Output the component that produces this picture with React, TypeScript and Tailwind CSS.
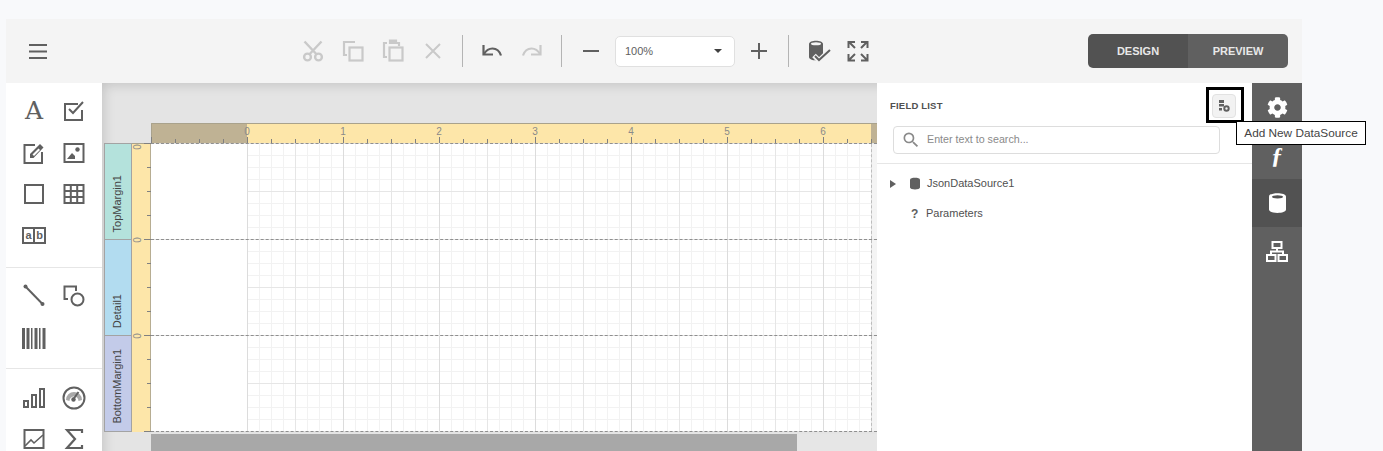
import type { ReactNode } from 'react';
import { FaCog } from 'react-icons/fa';
import { MdSearch } from 'react-icons/md';

const INK = '#606060';
const OFF = '#c9c9c9';

function ToolButton({ children }: { children: ReactNode }) {
  return <button className="flex h-10 w-10 shrink-0 items-center justify-center">{children}</button>;
}

function Separator() {
  return <div className="mx-[9px] h-8 w-px shrink-0 bg-[#b4b4b4]" />;
}

function ScissorsIcon() {
  return (
    <svg width="24" height="24" viewBox="0 0 24 24" fill="none" stroke={OFF} strokeWidth="2.4">
      <circle cx="6.5" cy="18" r="3.4" />
      <circle cx="17.5" cy="18" r="3.4" />
      <path d="M8.5 15.2 20.5 2.5M15.5 15.2 3.5 2.5" />
    </svg>
  );
}

function CopyIcon() {
  return (
    <svg width="24" height="24" viewBox="0 0 24 24" fill="none" stroke={OFF} strokeWidth="2.2">
      <path d="M14 3H3v13h3" />
      <rect x="8.5" y="8.5" width="13" height="13" />
    </svg>
  );
}

function PasteIcon() {
  return (
    <svg width="24" height="24" viewBox="0 0 24 24" fill="none" stroke={OFF} strokeWidth="2.2">
      <path d="M6 4H3v14h3M8 4h10v3" />
      <path d="M9 1.500h6V4H9z" fill={OFF} />
      <rect x="8.500" y="8.500" width="13" height="13" />
    </svg>
  );
}

function CloseIcon() {
  return (
    <svg width="24" height="24" viewBox="0 0 24 24" fill="none" stroke={OFF} strokeWidth="2">
      <path d="M5 5 19 19M19 5 5 19" />
    </svg>
  );
}

function UndoIcon({ color, flip }: { color: string; flip?: boolean }) {
  return (
    <svg
      width="22"
      height="16"
      viewBox="0 0 22 16"
      fill="none"
      stroke={color}
      strokeWidth="2.200"
      className={flip ? '-scale-x-100' : ''}
    >
      <path d="M2.500 2v9.500H12" />
      <path d="M3 11C5 7.500 8 5.500 11.500 5.500c4 0 7 2.500 8.500 7" />
    </svg>
  );
}

function DataCheckIcon() {
  return (
    <svg width="26" height="26" viewBox="0 0 26 26">
      <path d="M4 6c0-4.500 14-4.500 14 0v13c0 4.500-14 4.500-14 0z" fill={INK} />
      <ellipse cx="11" cy="5.800" rx="5" ry="1.500" fill="#f4f4f4" />
      <path d="M9 17.500 14 22.500 25.500 11.500" fill="none" stroke="#f4f4f4" strokeWidth="5" />
      <path d="M10 18 14 22 25 12" fill="none" stroke={INK} strokeWidth="2" />
    </svg>
  );
}

function ExpandIcon() {
  return (
    <svg width="22" height="22" viewBox="0 0 22 22" fill="none" stroke={INK} strokeWidth="2">
      <path d="M1.500 8V2H8M2 2l6 6M14 2h6.500v6M20 2l-6 6M1.500 14v6.500H8M2 20l6-6M14 20.500h6.500V14M20 20l-6-6" />
    </svg>
  );
}

function ToolIcon({ children }: { children: ReactNode }) {
  return (
    <svg width="24" height="24" viewBox="0 0 24 24" fill="none" stroke={INK} strokeWidth="2">
      {children}
    </svg>
  );
}

function ToolCell({ children }: { children: ReactNode }) {
  return <div className="flex items-center justify-center">{children}</div>;
}

function Toolbox() {
  return (
    <aside className="flex w-24 shrink-0 flex-col overflow-hidden bg-white">
      <div className="grid h-[185px] shrink-0 grid-cols-[40px_40px] auto-rows-[41.7px] border-b border-[#e6e6e6] pl-2 pt-[7px]">
        <ToolCell>
          <span className="font-['DejaVu_Serif',serif] text-[25px] leading-none text-[#606060]">A</span>
        </ToolCell>
        <ToolCell>
          <ToolIcon>
            <path d="M20 11v10H3V5h13" />
            <path d="M7 10l4 4 10-11" />
          </ToolIcon>
        </ToolCell>
        <ToolCell>
          <ToolIcon>
            <path d="M13 4H2.500v18H20V11" />
            <path d="M8 17v-4L18 3l3.500 3.500L11.500 17z" fill={INK} stroke="none" />
            <path d="M10.500 13.500 12 15 18 9 16.500 7.500z" fill="#ffffff" stroke="none" />
          </ToolIcon>
        </ToolCell>
        <ToolCell>
          <ToolIcon>
            <rect x="2.500" y="3" width="19" height="18" />
            <path d="M5 18l5-6 3 3v3z" fill={INK} stroke="none" />
            <circle cx="15.500" cy="8.500" r="2.200" fill={INK} stroke="none" />
          </ToolIcon>
        </ToolCell>
        <ToolCell>
          <ToolIcon>
            <rect x="3" y="3" width="18" height="18" />
          </ToolIcon>
        </ToolCell>
        <ToolCell>
          <ToolIcon>
            <rect x="2.500" y="3" width="19" height="18" />
            <path d="M2.500 9h19M2.500 15h19M8.800 3v18M15.200 3v18" />
          </ToolIcon>
        </ToolCell>
        <ToolCell>
          <div className="flex h-[17px] w-6 border-2 border-[#606060] font-['Liberation_Sans',sans-serif] text-[11px] font-bold leading-[13px] text-[#606060]">
            <span className="flex-1 border-r-2 border-[#606060] text-center">a</span>
            <span className="flex-1 text-center">b</span>
          </div>
        </ToolCell>
      </div>
      <div className="grid h-[101px] shrink-0 grid-cols-[40px_40px] auto-rows-[43px] border-b border-[#e6e6e6] pl-2 pt-1.5">
        <ToolCell>
          <ToolIcon>
            <path d="M3.500 2.500 20.500 20" />
            <circle cx="3.500" cy="2.500" r="2" fill={INK} stroke="none" />
            <circle cx="20.500" cy="20" r="2" fill={INK} stroke="none" />
          </ToolIcon>
        </ToolCell>
        <ToolCell>
          <ToolIcon>
            <path d="M14 7V2.500H2.500V15H6" />
            <circle cx="15.500" cy="15.500" r="6" />
          </ToolIcon>
        </ToolCell>
        <ToolCell>
          <svg width="24" height="22" viewBox="0 0 24 22" fill={INK}>
            <path d="M0 0h3v21H0zM4.500 0h3v21h-3zM9 0h1.500v21H9zM12.500 0h3v21h-3zM17 0h1.500v21H17zM20.500 0h3v21h-3z" />
          </svg>
        </ToolCell>
      </div>
      <div className="grid min-h-0 flex-1 grid-cols-[40px_40px] auto-rows-[41px] pl-2 pt-2">
        <ToolCell>
          <ToolIcon>
            <rect x="2" y="15" width="4" height="6" />
            <rect x="10" y="9" width="4" height="12" />
            <rect x="18" y="3" width="4" height="18" />
          </ToolIcon>
        </ToolCell>
        <ToolCell>
          <svg width="26" height="26" viewBox="0 0 26 26" fill="none">
            <circle cx="13" cy="13" r="10.500" stroke={INK} strokeWidth="2" />
            <path d="M5 15a8 8 0 1 1 16 0l-3.500 1a4.500 4.500 0 0 0-9 0z" fill="#a8a8a8" />
            <path d="M12.500 14 17.500 7" stroke={INK} strokeWidth="2" />
            <circle cx="12.500" cy="14.500" r="2.200" fill={INK} />
          </svg>
        </ToolCell>
        <ToolCell>
          <ToolIcon>
            <rect x="2.500" y="3" width="19" height="18" />
            <path d="M3 19l6-6 3 3 9-8" strokeWidth="1.600" />
          </ToolIcon>
        </ToolCell>
        <ToolCell>
          <ToolIcon>
            <path d="M20 6V3H5l8 9-8 9h15v-3" strokeWidth="2.200" />
          </ToolIcon>
        </ToolCell>
      </div>
    </aside>
  );
}

function TopRuler() {
  const ticks = Array.from({ length: 31 }, (_, i) => i * 24);
  return (
    <svg width="726" height="20" className="block font-['Liberation_Sans',sans-serif]">
      <rect x="0" y="0" width="726" height="20" fill="#fde6a9" />
      <rect x="0" y="0" width="96" height="20" fill="#bfb294" />
      <rect x="720" y="0" width="6" height="20" fill="#bfb294" />
      <path d="M.500 20V.500H726" fill="none" stroke="#a9a28c" />
      {ticks.map((t) => (
        <line
          key={t}
          x1={t + 0.5}
          x2={t + 0.5}
          y1={t % 96 === 0 ? 14 : 16}
          y2={20}
          stroke="#808080"
          strokeWidth="1"
        />
      ))}
      {[0, 1, 2, 3, 4, 5, 6].map((n) => (
        <text key={n} x={96 + n * 96} y="11.500" textAnchor="middle" fontSize="10" fill="#8a8a8a">
          {n}
        </text>
      ))}
    </svg>
  );
}

function SideRuler() {
  const ticks = Array.from({ length: 13 }, (_, i) => i * 24);
  return (
    <svg width="19" height="289" className="block shrink-0 font-['Liberation_Sans',sans-serif]">
      <rect x="0" y="0" width="19" height="289" fill="#fde6a9" />
      <line x1="18.500" x2="18.500" y1="0" y2="289" stroke="#b7ad92" />
      <line x1="0" x2="19" y1="0.500" y2="0.500" stroke="#a9a28c" />
      {ticks.map((t) => (
        <line key={t} x1={t % 96 === 0 ? 12 : 15} x2="19" y1={t + 0.5} y2={t + 0.5} stroke="#808080" />
      ))}
      {[4, 97, 193].map((t) => (
        <text key={t} x="9" y={t} textAnchor="middle" fontSize="10" fill="#8a8a8a" transform={`rotate(-90 9 ${t})`}>
          0
        </text>
      ))}
    </svg>
  );
}

function BandLabel({ name, color }: { name: string; color: string }) {
  return (
    <div className={`flex h-24 items-end justify-center border-b border-[#a3a3a3] pb-[7px] pr-0.5 ${color}`}>
      <span className="rotate-180 font-['Liberation_Sans',sans-serif] text-[11px] text-[#444444] [writing-mode:vertical-rl]">
        {name}
      </span>
    </div>
  );
}

function BandRow() {
  return (
    <div className="flex h-24 border-t border-dashed border-[#8f8f8f]">
      <div className="w-24 shrink-0 bg-white" />
      <div className="w-[625px] shrink-0 border-r border-dashed border-[#bdbdbd] bg-white bg-[linear-gradient(to_right,#dcdcdc_1px,transparent_1px),linear-gradient(to_bottom,#dcdcdc_1px,transparent_1px),linear-gradient(to_right,#e6e6e6_1px,transparent_1px),linear-gradient(to_bottom,#e6e6e6_1px,transparent_1px),linear-gradient(to_right,#f2f2f2_1px,transparent_1px),linear-gradient(to_bottom,#f2f2f2_1px,transparent_1px)] [background-size:96px_96px,96px_96px,48px_48px,48px_48px,12px_12px,12px_12px] bg-[position:0_-1px]" />
      <div className="flex-1 bg-[#f4f4f4]" />
    </div>
  );
}

function DesignCanvas() {
  return (
    <main className="flex w-[775px] shrink-0 flex-col overflow-hidden bg-[#e4e4e4] pt-10 shadow-[inset_10px_10px_12px_-8px_rgba(0,0,0,0.14)]">
      <div className="ml-[49px]">
        <TopRuler />
      </div>
      <div className="ml-0.5 flex">
        <div className="w-7 shrink-0 border-x border-t border-[#a3a3a3]">
          <BandLabel name="TopMargin1" color="bg-[#b4e2dc]" />
          <BandLabel name="Detail1" color="bg-[#b2dcf0]" />
          <BandLabel name="BottomMargin1" color="bg-[#c3cbe9]" />
        </div>
        <SideRuler />
        <div className="w-[726px] shrink-0 border-b border-dashed border-[#8f8f8f]">
          <BandRow />
          <BandRow />
          <BandRow />
        </div>
      </div>
      <div className="ml-[49px] mt-[2px] h-[17px] bg-[#e6e6e6]">
        <div className="h-full w-[646px] bg-[#a8a8a8]" />
      </div>
    </main>
  );
}

function AddSourceIcon() {
  return (
    <svg width="12" height="12" viewBox="0 0 12 12" fill={INK}>
      <path d="M1 0h5v3H1zM1 4h5v2.500H1zM1 8h3v2.500H1z" />
      <circle cx="8.500" cy="8.500" r="2.200" fill="none" stroke={INK} strokeWidth="2" />
    </svg>
  );
}

function FieldList() {
  return (
    <section className="flex w-[375px] shrink-0 flex-col bg-white font-['Liberation_Sans',sans-serif]">
      <div className="flex h-[43px] items-start justify-between pl-[13px] pr-2 pt-1">
        <span className="mt-[13px] text-[9.5px] font-bold leading-3 tracking-[0.2px] text-[#505050]">FIELD LIST</span>
        <div className="h-9 w-[38px] border-[3px] border-black pl-[3px] pt-1">
          <button className="flex h-6 w-6 items-center justify-center rounded border border-[#e2e2e2] bg-[#f2f2f2]">
            <AddSourceIcon />
          </button>
        </div>
      </div>
      <div className="ml-4 flex h-7 w-[327px] items-center rounded border border-[#dddddd] pl-[7px]">
        <MdSearch size={20} color="#8a8a8a" />
        <span className="ml-[6px] pb-0.5 text-[10.7px] text-[#8a8a8a]">Enter text to search...</span>
      </div>
      <div className="mt-[9px] h-px bg-[#e6e6e6]" />
      <div className="flex h-[30px] items-center pl-[13px] pt-[9px] text-[11px] text-[#505050]">
        <svg width="6" height="8" viewBox="0 0 6 8" fill="#606060">
          <path d="M0 0 6 4 0 8z" />
        </svg>
        <svg className="ml-[14px]" width="10" height="13" viewBox="0 0 10 13" fill="#606060">
          <path d="M0 2.500C0 0 10 0 10 2.500v8C10 13 0 13 0 10.500z" />
        </svg>
        <span className="ml-[7px]">JsonDataSource1</span>
      </div>
      <div className="flex h-[30px] items-center pl-[34px] pt-[9px] text-[11px] text-[#505050]">
        <span className="w-2 text-[12px] font-bold text-[#606060]">?</span>
        <span className="ml-[7px]">Parameters</span>
      </div>
    </section>
  );
}

function SideTab({ active, children }: { active?: boolean; children: ReactNode }) {
  return (
    <button className={`flex h-12 w-[50px] items-center justify-center ${active ? 'bg-[#525252]' : ''}`}>
      {children}
    </button>
  );
}

function SideTabs() {
  return (
    <nav className="flex w-[50px] shrink-0 flex-col bg-[#606060]">
      <SideTab>
        <FaCog size={21} color="#ffffff" />
      </SideTab>
      <SideTab>
        <span className="font-['Liberation_Serif',serif] text-[24px] font-bold italic leading-none text-white">ƒ</span>
      </SideTab>
      <SideTab active>
        <svg width="17" height="20" viewBox="0 0 17 20">
          <path d="M0 3.500C0 -1 17 -1 17 3.500v13C17 21 0 21 0 16.500z" fill="#ffffff" />
          <ellipse cx="8.500" cy="3.800" rx="5.500" ry="1.600" fill="#525252" />
        </svg>
      </SideTab>
      <SideTab>
        <svg width="22" height="21" viewBox="0 0 22 21" fill="none" stroke="#ffffff" strokeWidth="2">
          <rect x="6.500" y="1" width="9" height="6" />
          <rect x="1" y="14" width="8.500" height="6" />
          <rect x="12.500" y="14" width="8.500" height="6" />
          <path d="M11 7v3.500M5 14v-3.500h12V14" />
        </svg>
      </SideTab>
    </nav>
  );
}

export default function App() {
  return (
    <div className="relative h-[451px] w-[1383px] overflow-hidden bg-[#f8f9fb] pl-1.5 pt-[19px]">
      <div className="flex h-[432px] w-[1296px] flex-col">
        <header className="flex h-16 shrink-0 items-center bg-[#f4f4f4] pl-3 pr-3.5">
          <ToolButton>
            <svg width="18" height="15" viewBox="0 0 18 15" fill={INK}>
              <path d="M0 0h18v2H0zM0 6.500h18v2H0zM0 13h18v2H0z" />
            </svg>
          </ToolButton>
          <div className="ml-[235px] flex items-center">
            <ToolButton>
              <ScissorsIcon />
            </ToolButton>
            <ToolButton>
              <CopyIcon />
            </ToolButton>
            <ToolButton>
              <PasteIcon />
            </ToolButton>
            <ToolButton>
              <CloseIcon />
            </ToolButton>
            <Separator />
            <ToolButton>
              <UndoIcon color={INK} />
            </ToolButton>
            <ToolButton>
              <UndoIcon color={OFF} flip />
            </ToolButton>
            <Separator />
            <ToolButton>
              <svg width="16" height="2" fill={INK}>
                <rect width="16" height="2" />
              </svg>
            </ToolButton>
            <div className="mx-1 flex h-[31px] w-[120px] items-center justify-between rounded-[5px] border border-[#e0e0e0] bg-white pl-[9px] pr-3 font-['Liberation_Sans',sans-serif] text-[11px] text-[#606060]">
              <span>100%</span>
              <svg width="8" height="4" viewBox="0 0 8 4" fill="#404040">
                <path d="M0 0h8L4 4z" />
              </svg>
            </div>
            <ToolButton>
              <svg width="16" height="16" fill={INK}>
                <path d="M0 7h16v2H0zM7 0h2v16H7z" />
              </svg>
            </ToolButton>
            <Separator />
            <ToolButton>
              <DataCheckIcon />
            </ToolButton>
            <ToolButton>
              <ExpandIcon />
            </ToolButton>
          </div>
          <div className="ml-auto flex h-[34px] w-[200px] overflow-hidden rounded-[5px] font-['Liberation_Sans',sans-serif] text-[11px] font-bold text-[#e8e8e8]">
            <button className="w-[100px] bg-[#525252]">DESIGN</button>
            <button className="w-[100px] bg-[#606060]">PREVIEW</button>
          </div>
        </header>
        <div className="flex min-h-0 flex-1">
          <Toolbox />
          <DesignCanvas />
          <FieldList />
          <SideTabs />
        </div>
      </div>
      <div className="absolute left-[1236px] top-[121px] flex h-6 w-[130px] items-center justify-center border border-black bg-white pt-px font-['Liberation_Sans',sans-serif] text-[11.8px] text-[#444444]">
        Add New DataSource
      </div>
    </div>
  );
}
